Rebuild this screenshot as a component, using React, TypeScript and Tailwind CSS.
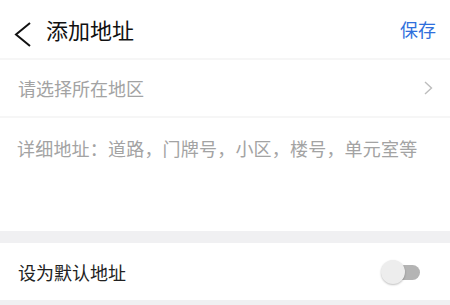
import React from 'react';

export default function App() {
  const font = { fontFamily: '"Noto Sans CJK SC", "Noto Sans", sans-serif' };

  return (
    <div className="w-[450px] h-[305px] bg-[#f0f0f2] overflow-hidden" style={font}>
      {/* Header */}
      <div className="h-[58px] bg-white flex items-center justify-between pl-[14px] pr-[14px]">
        <div className="flex items-center">
          <svg className="mt-[10px]" width="17" height="25" viewBox="0 0 17 25" fill="none">
            <path d="M16 1 L2 12.5 L16 24" stroke="#111" strokeWidth="2" strokeLinejoin="miter" />
          </svg>
          <span className="ml-[15px] text-[22px] leading-none text-[#111]">添加地址</span>
        </div>
        <span className="text-[18px] leading-none text-[#2f6fdc]">保存</span>
      </div>
      <div className="h-[2px] bg-[#f6f6f6]" />

      {/* Region picker */}
      <div className="h-[56px] bg-white flex items-center justify-between pl-[18px] pr-[17px]">
        <span className="text-[18px] leading-none text-[#a3a3a3]">请选择所在地区</span>
        <svg width="9" height="14" viewBox="0 0 9 14" fill="none">
          <path d="M1 1 L7.5 7 L1 13" stroke="#bdbdbd" strokeWidth="1.4" />
        </svg>
      </div>
      <div className="h-[2px] bg-[#f6f6f6]" />

      {/* Detail address */}
      <div className="h-[113px] bg-white pl-[17px] pt-[19px]">
        <span className="text-[18px] leading-none text-[#a3a3a3] tracking-[0.2px]">
          详细地址：道路，门牌号，小区，楼号，单元室等
        </span>
      </div>

      {/* Gap */}
      <div className="h-[12px]" />

      {/* Default switch */}
      <div className="h-[57px] bg-white flex items-center justify-between pl-[18px] pr-[30px]">
        <span className="text-[18px] leading-none text-[#222]">设为默认地址</span>
        <div className="relative w-[39px] h-[24px]">
          <div className="absolute left-[14px] top-[5px] w-[25px] h-[15px] rounded-full bg-[#b4b4b4]" />
          <div className="absolute left-0 top-0 w-[24px] h-[24px] rounded-full bg-[#ededed] shadow-[0_1px_2px_rgba(0,0,0,0.25)]" />
        </div>
      </div>
    </div>
  );
}
